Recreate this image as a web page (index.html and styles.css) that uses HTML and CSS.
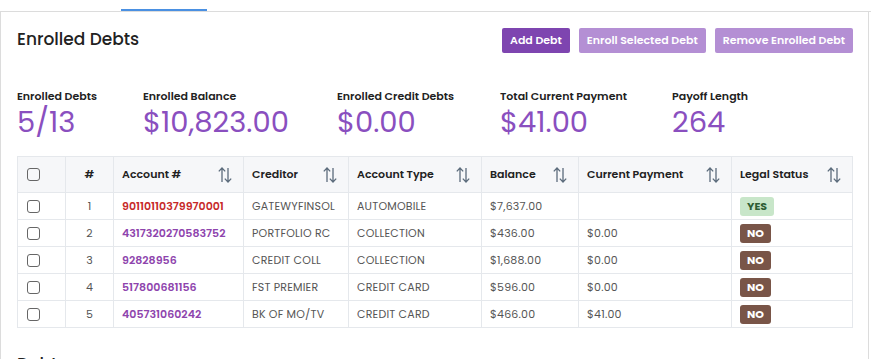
FILE: index.html
```html
<!DOCTYPE html>
<html lang="en">
  <head>
    <meta charset="UTF-8" />
    <meta name="viewport" content="width=device-width, initial-scale=1.0" />
    <title>Enrolled Debts</title>
    <link rel="stylesheet" href="styles.css">
  </head>
  <body>
    <div class="tabs">
      <span class="tab"></span>
      <span class="tab tab--active"></span>
    </div>

    <main class="panel">
      <div class="panel__head">
        <h2>Enrolled Debts</h2>
        <div class="actions">
          <button type="button" class="btn">Add Debt</button>
          <button type="button" class="btn btn--light">Enroll Selected Debt</button>
          <button type="button" class="btn btn--light">Remove Enrolled Debt</button>
        </div>
      </div>

      <div class="stats">
        <div class="stat stat--debts">
          <span class="stat__label">Enrolled Debts</span>
          <span class="stat__value">5/13</span>
        </div>
        <div class="stat stat--balance">
          <span class="stat__label">Enrolled Balance</span>
          <span class="stat__value">$10,823.00</span>
        </div>
        <div class="stat stat--credit">
          <span class="stat__label">Enrolled Credit Debts</span>
          <span class="stat__value">$0.00</span>
        </div>
        <div class="stat stat--payment">
          <span class="stat__label">Total Current Payment</span>
          <span class="stat__value">$41.00</span>
        </div>
        <div class="stat">
          <span class="stat__label">Payoff Length</span>
          <span class="stat__value">264</span>
        </div>
      </div>

      <table class="debts">
        <colgroup>
          <col class="col-check" />
          <col class="col-num" />
          <col class="col-acct" />
          <col class="col-creditor" />
          <col class="col-type" />
          <col class="col-balance" />
          <col class="col-payment" />
          <col />
        </colgroup>
        <thead>
          <tr>
            <th><span class="check"></span></th>
            <th class="center">#</th>
            <th><div class="th">Account #<svg class="sort" viewBox="0 0 16 18"><path d="M5 16V2M1.8 5.4L5 2l3.2 3.4M11 2v14M7.8 12.6L11 16l3.2-3.4"/></svg></div></th>
            <th><div class="th">Creditor<svg class="sort" viewBox="0 0 16 18"><path d="M5 16V2M1.8 5.4L5 2l3.2 3.4M11 2v14M7.8 12.6L11 16l3.2-3.4"/></svg></div></th>
            <th><div class="th">Account Type<svg class="sort" viewBox="0 0 16 18"><path d="M5 16V2M1.8 5.4L5 2l3.2 3.4M11 2v14M7.8 12.6L11 16l3.2-3.4"/></svg></div></th>
            <th><div class="th">Balance<svg class="sort" viewBox="0 0 16 18"><path d="M5 16V2M1.8 5.4L5 2l3.2 3.4M11 2v14M7.8 12.6L11 16l3.2-3.4"/></svg></div></th>
            <th><div class="th">Current Payment<svg class="sort" viewBox="0 0 16 18"><path d="M5 16V2M1.8 5.4L5 2l3.2 3.4M11 2v14M7.8 12.6L11 16l3.2-3.4"/></svg></div></th>
            <th><div class="th">Legal Status<svg class="sort" viewBox="0 0 16 18"><path d="M5 16V2M1.8 5.4L5 2l3.2 3.4M11 2v14M7.8 12.6L11 16l3.2-3.4"/></svg></div></th>
          </tr>
        </thead>
        <tbody>
          <tr>
            <td><span class="check"></span></td>
            <td class="center">1</td>
            <td class="acct acct--alert">90110110379970001</td>
            <td>GATEWYFINSOL</td>
            <td>AUTOMOBILE</td>
            <td>$7,637.00</td>
            <td></td>
            <td><span class="badge badge--yes">YES</span></td>
          </tr>
          <tr>
            <td><span class="check"></span></td>
            <td class="center">2</td>
            <td class="acct">4317320270583752</td>
            <td>PORTFOLIO RC</td>
            <td>COLLECTION</td>
            <td>$436.00</td>
            <td>$0.00</td>
            <td><span class="badge badge--no">NO</span></td>
          </tr>
          <tr>
            <td><span class="check"></span></td>
            <td class="center">3</td>
            <td class="acct">92828956</td>
            <td>CREDIT COLL</td>
            <td>COLLECTION</td>
            <td>$1,688.00</td>
            <td>$0.00</td>
            <td><span class="badge badge--no">NO</span></td>
          </tr>
          <tr>
            <td><span class="check"></span></td>
            <td class="center">4</td>
            <td class="acct">517800681156</td>
            <td>FST PREMIER</td>
            <td>CREDIT CARD</td>
            <td>$596.00</td>
            <td>$0.00</td>
            <td><span class="badge badge--no">NO</span></td>
          </tr>
          <tr>
            <td><span class="check"></span></td>
            <td class="center">5</td>
            <td class="acct">405731060242</td>
            <td>BK OF MO/TV</td>
            <td>CREDIT CARD</td>
            <td>$466.00</td>
            <td>$41.00</td>
            <td><span class="badge badge--no">NO</span></td>
          </tr>
        </tbody>
      </table>

      <h2 class="next">Debts</h2>
    </main>
  </body>
</html>
```

FILE: styles.css
```css
body {
  margin: 0;
  font-family: "Poppins", "Open Sans", "Liberation Sans", sans-serif;
  color: #222;
  background: #fff;
  overflow: hidden;
}

/* Tabs */
.tabs {
  display: flex;
  height: 11px;
  border-bottom: 1px solid #dcdcdc;
}
.tab {
  width: 121px;
}
.tab--active {
  width: 86px;
  height: 9px;
  border-bottom: 2px solid #4a90e2;
}

/* Panel */
.panel {
  width: 851px;
  padding: 0 0 0 16px;
  border-left: 1px solid #dcdcdc;
  border-right: 1px solid #dcdcdc;
}

.panel__head {
  display: flex;
  justify-content: space-between;
  align-items: flex-start;
  padding: 16px 15px 0 0;
}
.panel__head h2 {
  margin: 0;
  font-size: 17px;
  font-weight: 500;
  line-height: 22px;
}

.actions {
  display: flex;
  gap: 9px;
}
.btn {
  height: 25px;
  padding: 0 8px;
  border: none;
  border-radius: 2px;
  background-color: #7e45b0;
  color: #fff;
  font-family: inherit;
  font-size: 11px;
  font-weight: 600;
  cursor: pointer;
}
.btn--light {
  background-color: #b48fd4;
}

/* Stats */
.stats {
  display: flex;
  margin-top: 36px;
}
.stat {
  display: flex;
  flex-direction: column;
}
.stat--debts {
  width: 126px;
}
.stat--balance {
  width: 194px;
}
.stat--credit {
  width: 163px;
}
.stat--payment {
  width: 172px;
}
.stat__label {
  font-size: 11px;
  font-weight: 600;
  line-height: 15px;
}
.stat__value {
  font-size: 29px;
  line-height: 36px;
  color: #8a4fbf;
}

/* Table */
.debts {
  width: 836px;
  margin-top: 16px;
  border-collapse: collapse;
  table-layout: fixed;
  font-size: 11px;
}
.col-check,
.col-num {
  width: 48px;
}
.col-acct {
  width: 130px;
}
.col-creditor {
  width: 105px;
}
.col-type {
  width: 133px;
}
.col-balance {
  width: 97px;
}
.col-payment {
  width: 153px;
}
.debts th,
.debts td {
  border: 1px solid #e5e8ec;
  padding: 0 8px;
  text-align: left;
}
.debts th {
  height: 35px;
  background-color: #f6f7f9;
  font-weight: 600;
}
.debts td {
  height: 26px;
  color: #555;
  font-size: 11px;
  letter-spacing: 0.2px;
}
.debts .center {
  text-align: center;
}
.th {
  display: flex;
  justify-content: space-between;
  align-items: center;
}
.sort {
  width: 16px;
  height: 18px;
  fill: none;
  stroke: #5b6b7b;
  stroke-width: 1.3;
  margin-right: 2px;
}

.check {
  display: block;
  width: 11px;
  height: 11px;
  border: 1px solid #666;
  border-radius: 3px;
  margin-left: 1px;
}

.debts .acct {
  font-weight: 600;
  letter-spacing: 0;
  color: #8e44ad;
}
.debts .acct--alert {
  color: #c62828;
}

.badge {
  display: inline-block;
  padding: 3px 7px;
  border-radius: 3px;
  font-size: 11px;
  font-weight: 700;
  line-height: 13px;
  letter-spacing: 0;
}
.badge--yes {
  background-color: #c8e6c9;
  color: #2e5e34;
}
.badge--no {
  background-color: #795548;
  color: #fff;
}

.next {
  margin: 23px 0 0;
  font-size: 17px;
  font-weight: 500;
}
```
